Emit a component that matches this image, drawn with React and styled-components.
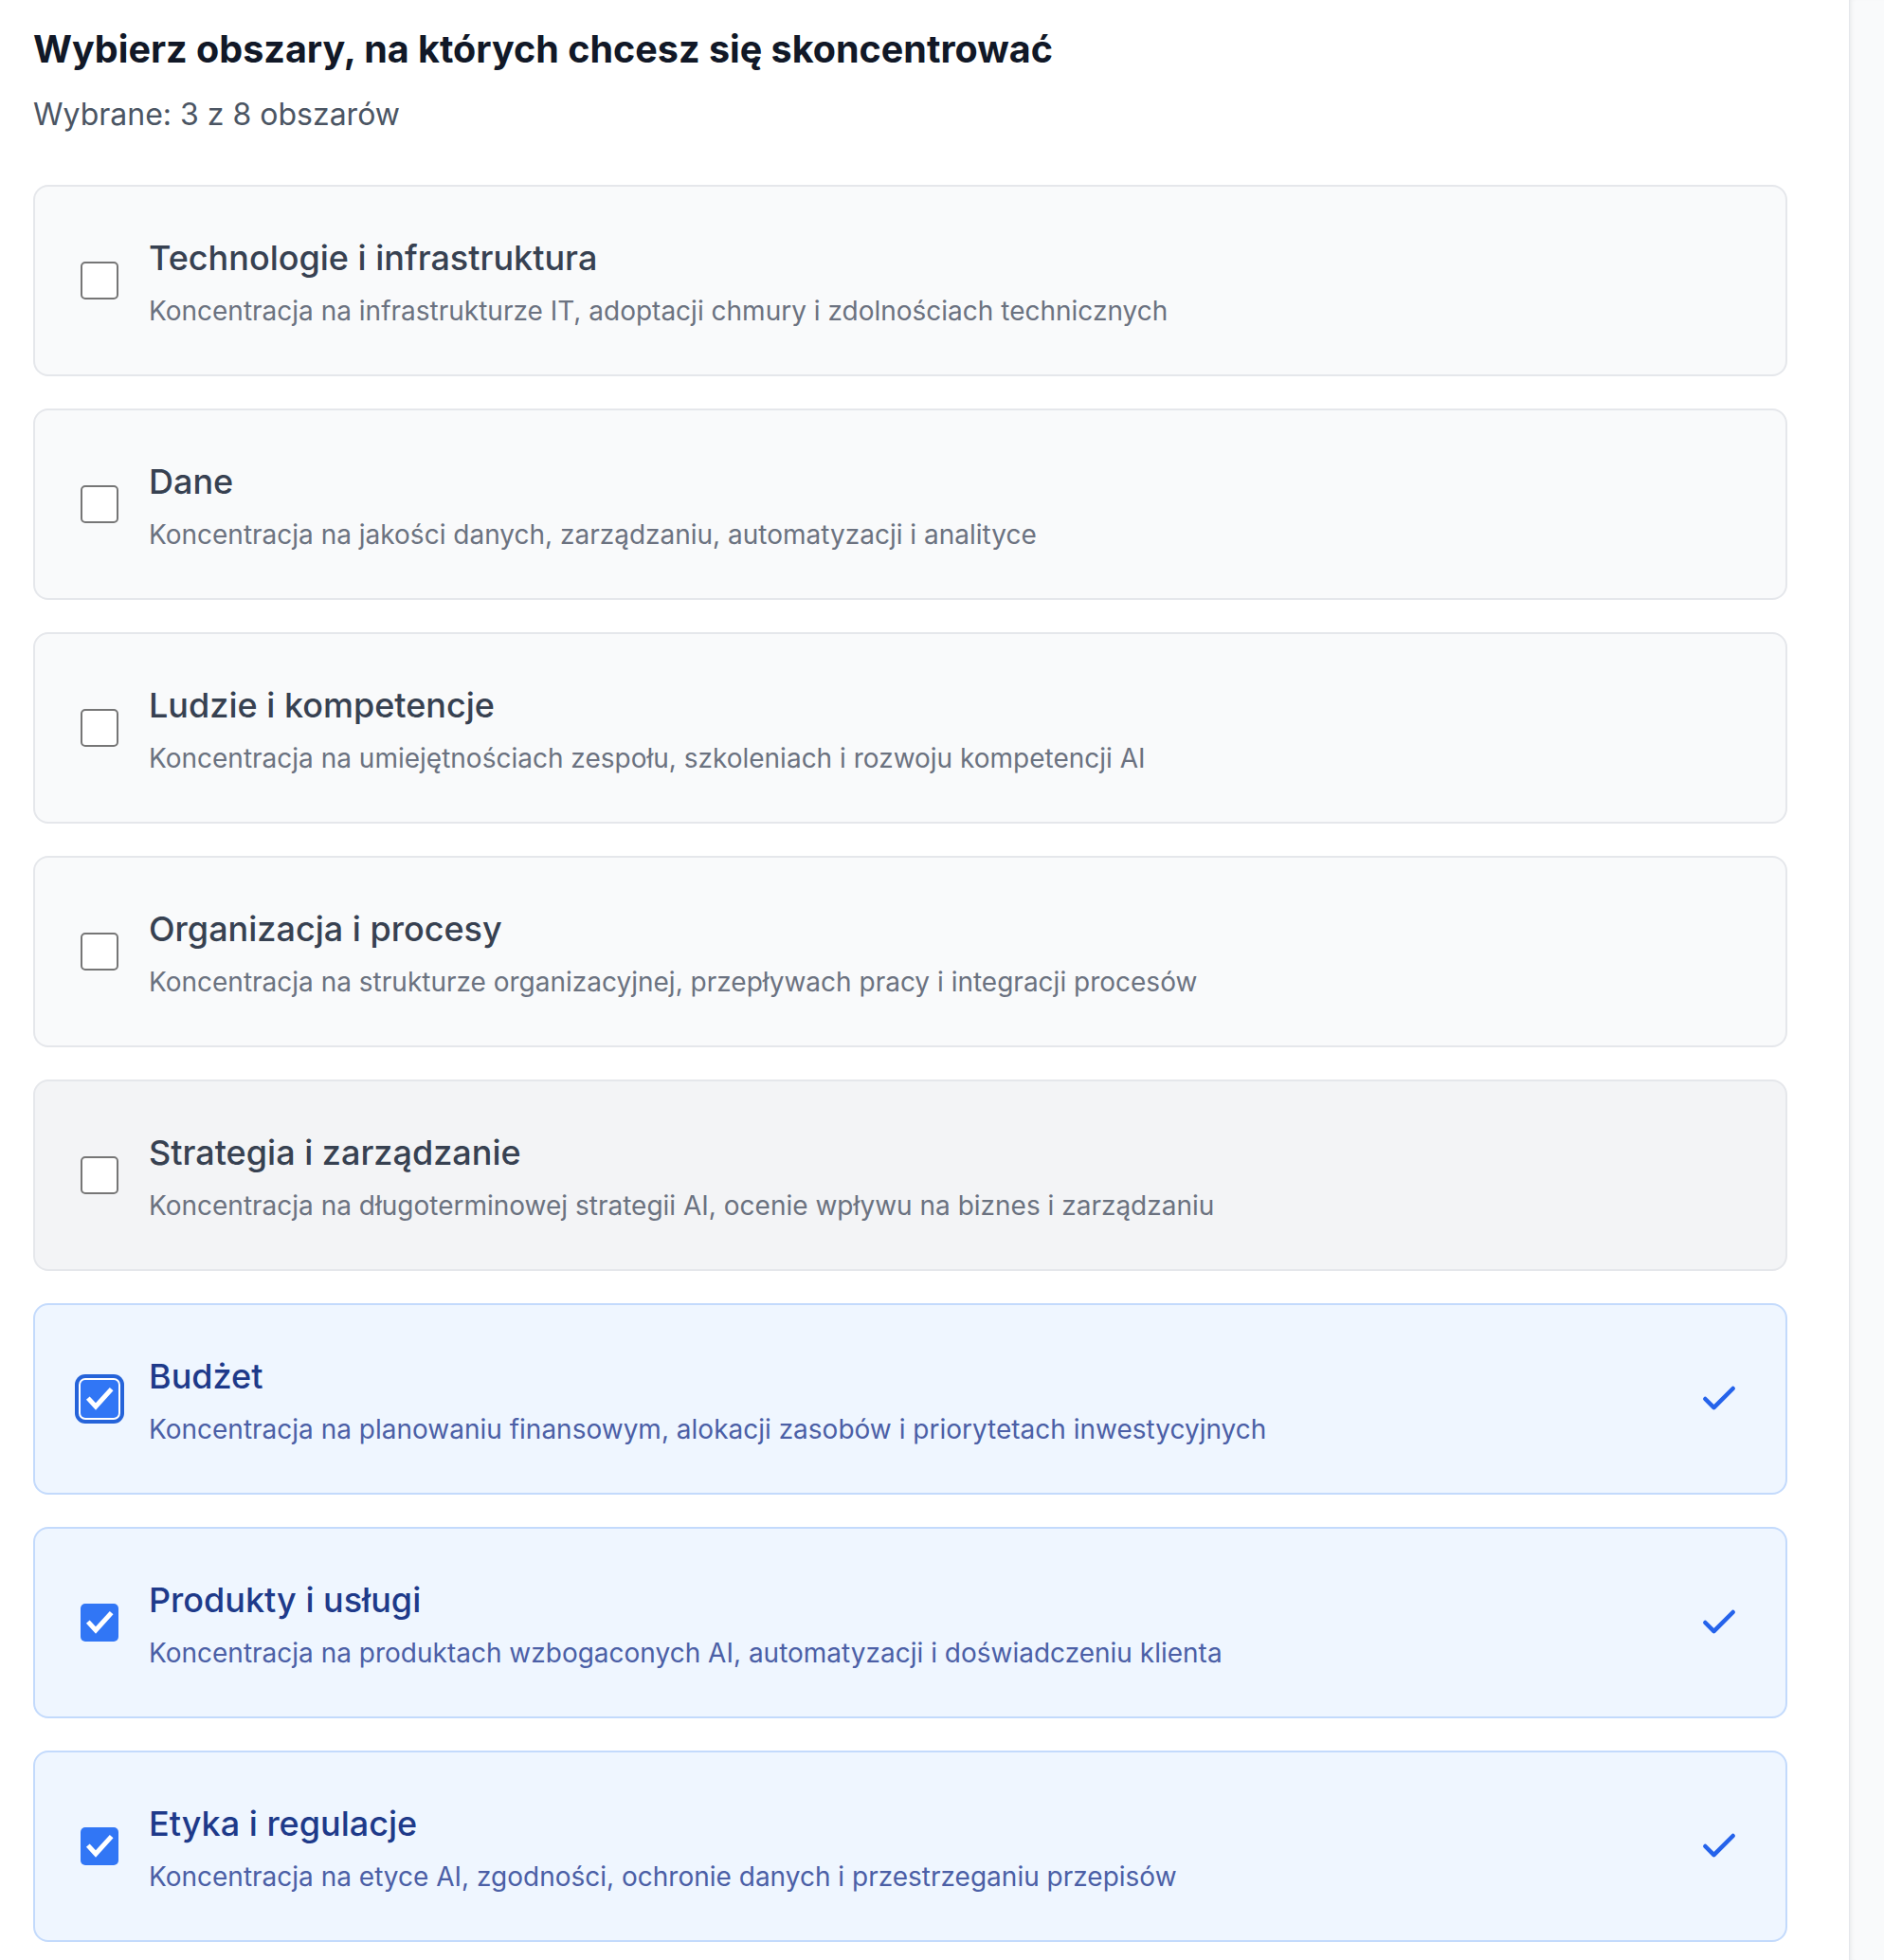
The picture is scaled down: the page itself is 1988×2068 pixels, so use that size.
import React, { useState } from 'react';
import styled, { createGlobalStyle } from 'styled-components';
import { Check } from 'lucide-react';

const GlobalStyle = createGlobalStyle`
  html, body {
    margin: 0;
    padding: 0;
    background: #ffffff;
  }
  body {
    font-family: Inter, "Noto Sans", "Liberation Sans", sans-serif;
    -webkit-font-smoothing: antialiased;
  }
  * {
    box-sizing: border-box;
  }
`;

const Layout = styled.div`
  display: grid;
  grid-template-columns: 1fr 37px;
  min-height: 100vh;
`;

const Main = styled.main`
  padding: 26px 65px 20px 35px;
`;

const SidePanel = styled.aside`
  background: #f9fafb;
  border-left: 1px solid #e5e7eb;
  box-shadow: inset 4px 0 5px -3px rgba(17, 24, 39, 0.08);
`;

const Title = styled.h2`
  margin: 0;
  font-size: 39.5px;
  line-height: 53px;
  font-weight: 700;
  color: #111827;
`;

const Counter = styled.p`
  margin: 21px 0 0;
  font-size: 32px;
  line-height: 42px;
  color: #4b5563;
`;

const List = styled.div`
  display: flex;
  flex-direction: column;
  gap: 34px;
  margin-top: 53px;
`;

const Card = styled.label`
  display: flex;
  align-items: center;
  gap: 32px;
  padding: 48px;
  border: 2px solid ${(p) => (p.$checked ? '#c3dafc' : '#e5e7eb')};
  border-radius: 16px;
  background: ${(p) => (p.$checked ? '#eff6ff' : p.$hover ? '#f3f4f6' : '#f9fafb')};
  cursor: pointer;
`;

const Box = styled.span`
  flex: none;
  width: 40px;
  height: 40px;
  border-radius: 5px;
  border: ${(p) => (p.$checked ? 'none' : '2px solid #767676')};
  background: ${(p) => (p.$checked ? '#3176f5' : '#ffffff')};
  display: flex;
  align-items: center;
  justify-content: center;
  box-shadow: ${(p) => (p.$focus ? '0 0 0 2px #ffffff, 0 0 0 6px #2563d9' : 'none')};
`;

const Body = styled.div`
  flex: 1;
  min-width: 0;
`;

const ItemTitle = styled.div`
  font-size: 36px;
  line-height: 55px;
  font-weight: 500;
  color: ${(p) => (p.$checked ? '#1e3a8a' : '#374151')};
`;

const ItemDesc = styled.div`
  margin-top: 9px;
  font-size: 28px;
  line-height: 38px;
  color: ${(p) => (p.$checked ? '#4b5fa6' : '#6b7280')};
`;

const Tick = styled(Check)`
  flex: none;
  color: #2563eb;
`;

const areas = [
  {
    id: 'tech',
    title: 'Technologie i infrastruktura',
    desc: 'Koncentracja na infrastrukturze IT, adoptacji chmury i zdolnościach technicznych',
  },
  {
    id: 'data',
    title: 'Dane',
    desc: 'Koncentracja na jakości danych, zarządzaniu, automatyzacji i analityce',
  },
  {
    id: 'people',
    title: 'Ludzie i kompetencje',
    desc: 'Koncentracja na umiejętnościach zespołu, szkoleniach i rozwoju kompetencji AI',
  },
  {
    id: 'org',
    title: 'Organizacja i procesy',
    desc: 'Koncentracja na strukturze organizacyjnej, przepływach pracy i integracji procesów',
  },
  {
    id: 'strategy',
    title: 'Strategia i zarządzanie',
    desc: 'Koncentracja na długoterminowej strategii AI, ocenie wpływu na biznes i zarządzaniu',
  },
  {
    id: 'budget',
    title: 'Budżet',
    desc: 'Koncentracja na planowaniu finansowym, alokacji zasobów i priorytetach inwestycyjnych',
  },
  {
    id: 'products',
    title: 'Produkty i usługi',
    desc: 'Koncentracja na produktach wzbogaconych AI, automatyzacji i doświadczeniu klienta',
  },
  {
    id: 'ethics',
    title: 'Etyka i regulacje',
    desc: 'Koncentracja na etyce AI, zgodności, ochronie danych i przestrzeganiu przepisów',
  },
];

function BoxMark() {
  return (
    <svg width="40" height="40" viewBox="0 0 40 40" fill="none">
      <path
        d="M9.5 21l6.5 7L31 11.5"
        stroke="#ffffff"
        strokeWidth="5"
        strokeLinecap="square"
        strokeLinejoin="miter"
      />
    </svg>
  );
}

export default function App() {
  const [selected, setSelected] = useState(['budget', 'products', 'ethics']);
  const [focused, setFocused] = useState('budget');

  const toggle = (id) => {
    setFocused(id);
    setSelected((prev) => (prev.includes(id) ? prev.filter((x) => x !== id) : [...prev, id]));
  };

  return (
    <>
      <GlobalStyle />
      <Layout>
        <Main>
          <Title>Wybierz obszary, na których chcesz się skoncentrować</Title>
          <Counter>
            Wybrane: {selected.length} z {areas.length} obszarów
          </Counter>
          <List>
            {areas.map((a) => {
              const checked = selected.includes(a.id);
              return (
                <Card
                  key={a.id}
                  $checked={checked}
                  $hover={a.id === 'strategy'}
                  onClick={() => toggle(a.id)}
                >
                  <Box $checked={checked} $focus={focused === a.id}>
                    {checked && <BoxMark />}
                  </Box>
                  <Body>
                    <ItemTitle $checked={checked}>{a.title}</ItemTitle>
                    <ItemDesc $checked={checked}>{a.desc}</ItemDesc>
                  </Body>
                  {checked && <Tick size={44} strokeWidth={2.5} />}
                </Card>
              );
            })}
          </List>
        </Main>
        <SidePanel />
      </Layout>
    </>
  );
}
